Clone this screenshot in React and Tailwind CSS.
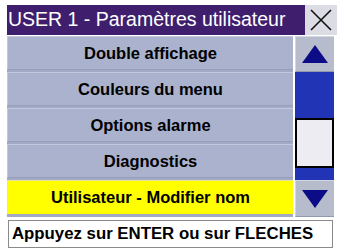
import React from 'react'

const items = [
  'Double affichage',
  'Couleurs du menu',
  'Options alarme',
  'Diagnostics',
]

const font = { fontFamily: '"Liberation Sans", Arial, sans-serif' }

const Row = ({ label, active = false }) => (
  <div
    className={`h-[34px] flex items-center justify-center font-bold text-[16.5px] text-black border-t border-l ${
      active
        ? 'bg-[#ffff00] border-[#e6e6a0]'
        : 'bg-[#abb2cd] border-[#c3c8dc] border-b border-b-[#979eba]'
    }`}
  >
    {label}
  </div>
)

const Arrow = ({ down = false }) => (
  <svg width="28" height="20" viewBox="0 0 28 20">
    <polygon
      points={down ? '1,1 27,1 14,19' : '14,1 27,19 1,19'}
      fill="#0b0c86"
    />
  </svg>
)

export default function App() {
  return (
    <div className="w-[337px] h-[248px] bg-white pl-[7px] pt-[5px] overflow-hidden" style={font}>
      <div className="flex h-[30px]">
        <div className="flex-1 bg-[#3f1f6d] text-white text-[19.5px] leading-none flex items-center pl-[1px] whitespace-nowrap overflow-hidden">
          USER 1 - Paramètres utilisateur
        </div>
        <div className="w-[32px] bg-[#dcdde4] flex items-center justify-center">
          <svg width="24" height="24" viewBox="0 0 24 24">
            <path d="M2 2 L22 22 M22 2 L2 22" stroke="#111" strokeWidth="1.6" />
          </svg>
        </div>
      </div>

      <div className="flex gap-[2px] mt-[1px]">
        <div className="w-[286px] flex flex-col gap-[2px] bg-[#a3aac5]">
          {items.map((t) => (
            <Row key={t} label={t} />
          ))}
          <Row label="Utilisateur - Modifier nom" active />
        </div>

        <div className="w-[39px] flex flex-col bg-[#b4b9cb]">
          <div className="h-[36px] flex items-center justify-center bg-[#b7bccd] border-t border-l border-[#d3d6e0] border-b border-b-[#9399ad]">
            <Arrow />
          </div>
          <div className="flex-1 bg-[#2234b6] flex flex-col pt-[46px] pb-[12px]">
            <div className="h-[50px] bg-[#ececf2] border-2 border-black" />
          </div>
          <div className="h-[37px] flex items-center justify-center bg-[#b7bccd] border-t border-l border-[#d3d6e0] border-b border-b-[#9399ad]">
            <Arrow down />
          </div>
        </div>
      </div>

      <div className="mt-[3px] ml-[1px] w-[325px] h-[28px] bg-white border border-[#8a8a8a] flex items-center pl-[3px] font-bold text-[16.8px] text-black whitespace-nowrap">
        Appuyez sur ENTER ou sur FLECHES
      </div>
    </div>
  )
}
